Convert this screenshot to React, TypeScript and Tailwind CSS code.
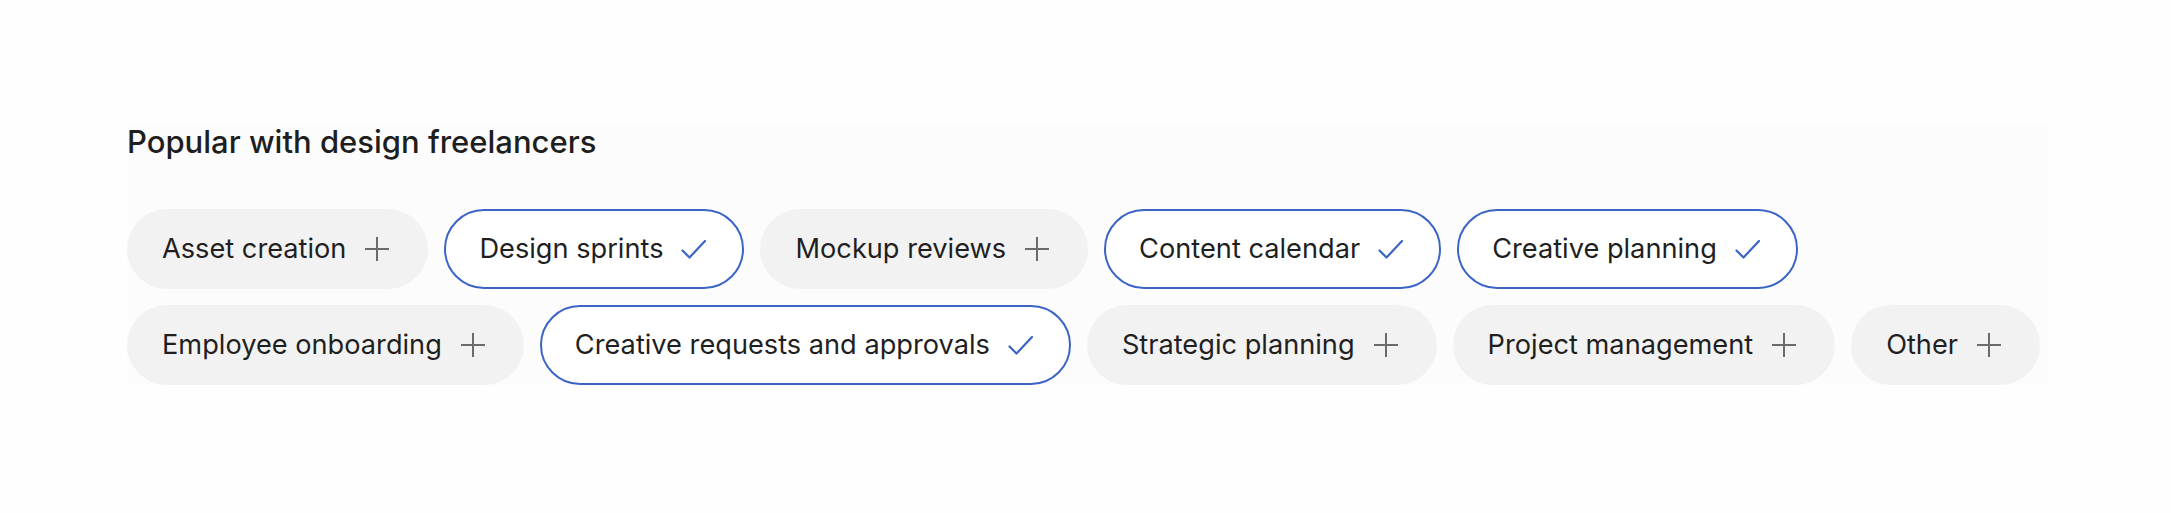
import React from 'react';

// ── Use-case chips ───────────────────────────────────────────────────────────
// Pill toggles: gray with a plus when off, outlined blue with a check when on.
const CHIPS: { label: string; selected: boolean }[] = [
  { label: 'Asset creation', selected: false },
  { label: 'Design sprints', selected: true },
  { label: 'Mockup reviews', selected: false },
  { label: 'Content calendar', selected: true },
  { label: 'Creative planning', selected: true },
  { label: 'Employee onboarding', selected: false },
  { label: 'Creative requests and approvals', selected: true },
  { label: 'Strategic planning', selected: false },
  { label: 'Project management', selected: false },
  { label: 'Other', selected: false },
];

const PlusIcon = () => (
  <svg width="26" height="26" viewBox="0 0 26 26" className="shrink-0 text-[#6b6b6b]">
    <path d="M13 1v24M1 13h24" stroke="currentColor" strokeWidth="2" fill="none" />
  </svg>
);

const CheckIcon = () => (
  <svg width="25" height="26" viewBox="0 0 25 26" className="shrink-0 text-[#3c64c6]">
    <path d="M1.5 14.5l7 7L24 5" stroke="currentColor" strokeWidth="2.2" fill="none" strokeLinecap="round" strokeLinejoin="round" />
  </svg>
);

const Chip: React.FC<{ label: string; selected: boolean }> = ({ label, selected }) => (
  <button
    type="button"
    className={`flex items-center gap-[18px] h-[80px] rounded-full border-2 pl-[33px] pr-[36px] text-[27.2px] text-[#1f1f1f] ${
      selected ? 'border-[#3c64c6] bg-white' : 'border-transparent bg-[#f3f2f3]'
    }`}
  >
    <span>{label}</span>
    {selected ? <CheckIcon /> : <PlusIcon />}
  </button>
);

export default function App() {
  return (
    <div
      className="w-[2171px] h-[513px] bg-[#fefefe] pt-[124px] pl-[127px]"
      style={{ fontFamily: 'Inter, "Noto Sans", sans-serif' }}
    >
      <div className="w-[1922px] bg-[#fcfcfc]">
        <h2 className="text-[31px] leading-[36px] font-medium text-[#1e1e1e]">Popular with design freelancers</h2>
        <div className="mt-[49px] flex flex-wrap gap-x-[16px] gap-y-[16px]">
          {CHIPS.map((c) => (
            <Chip key={c.label} label={c.label} selected={c.selected} />
          ))}
        </div>
      </div>
    </div>
  );
}
